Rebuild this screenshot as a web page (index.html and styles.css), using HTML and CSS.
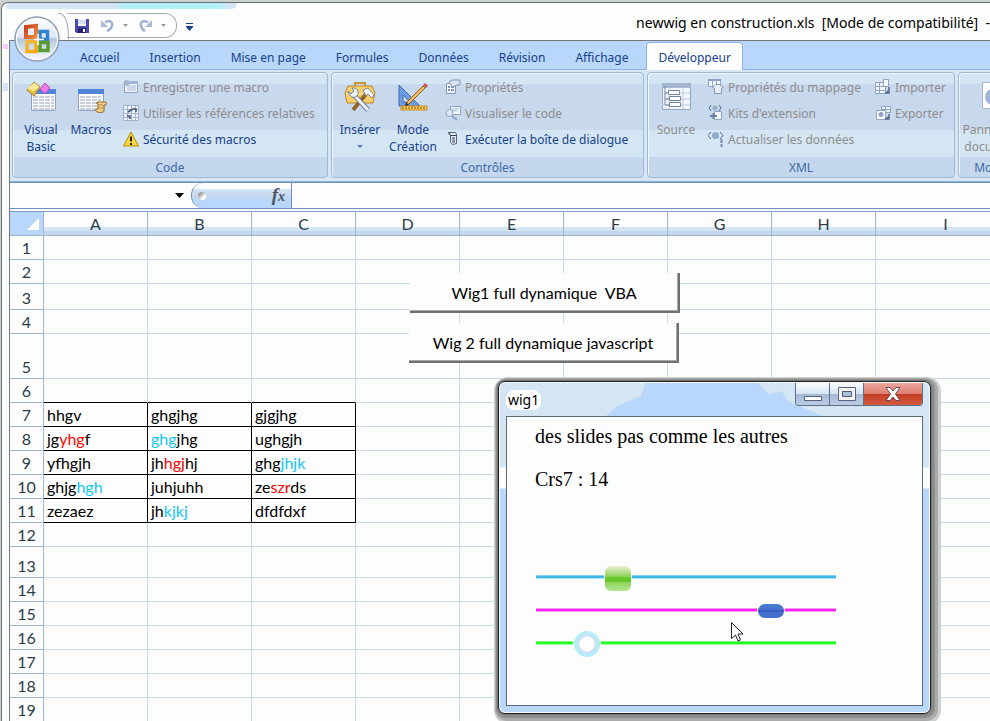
FILE: index.html
```html
<!DOCTYPE html>
<html lang="fr">
<head>
  <meta charset="UTF-8">
  <meta name="viewport" content="width=device-width, initial-scale=1.0">
  <title>newwig en construction.xls</title>
  <link rel="stylesheet" href="styles.css">
</head>
<body>
<div class="window">

  <header class="titlebar">
    <div class="glow"></div>
    <div class="quick">
      <button class="qbtn" aria-label="Enregistrer">
        <svg width="14" height="14" viewBox="0 0 14 14"><path d="M0 0h14v14H1.500L0 12.500z" fill="#4a48b0"/><path d="M3 0h8v7H3z" fill="#f4f6fc"/><path d="M3 2h8M3 4h8" stroke="#b9c4e2"/><path d="M3 9h8v5H3z" fill="#26246e"/><path d="M8 10h2v3H8z" fill="#fff"/></svg>
      </button>
      <button class="qbtn undo" aria-label="Annuler">
        <svg width="13" height="13" viewBox="0 0 13 13"><path d="M4 3.500C8 .500 12 2.500 11 6.500 10.500 9 8.500 11 6 12" fill="none" stroke="#9fb2cf" stroke-width="2.500"/><path d="M0 1v7h7z" fill="#a9bad5"/></svg>
      </button>
      <svg class="arrow" width="5" height="3"><path d="M0 0h5L2.500 3z" fill="#999"/></svg>
      <button class="qbtn redo" aria-label="Rétablir">
        <svg width="13" height="13" viewBox="0 0 13 13"><path d="M9 3.500C5 .500 1 2.500 2 6.500 2.500 9 4 11 6 12" fill="none" stroke="#9fb2cf" stroke-width="2.500"/><path d="M13 1v7H6z" fill="#a9bad5"/></svg>
      </button>
      <svg class="arrow" width="5" height="3"><path d="M0 0h5L2.500 3z" fill="#999"/></svg>
    </div>
    <button class="more" aria-label="Personnaliser">
      <svg width="7" height="8" viewBox="0 0 7 8"><path d="M0 0h7v1H0zM0 3h7v1L3.500 8 0 4z" fill="#15428b"/></svg>
    </button>
    <h1 class="caption">newwig en construction.xls&nbsp; [Mode de compatibilité]&nbsp; -</h1>
  </header>

  <button class="office" aria-label="Bouton Office">
    <svg width="46" height="46" viewBox="0 0 46 46">
      <defs>
        <linearGradient id="orb" x2="0" y2="1"><stop offset="0" stop-color="#fff"/><stop offset=".45" stop-color="#dfe8f3"/><stop offset=".5" stop-color="#b4c8df"/><stop offset="1" stop-color="#fbfdff"/></linearGradient>
        <linearGradient id="red" x2="1" y2="1"><stop stop-color="#c8401c"/><stop offset="1" stop-color="#f08a3c"/></linearGradient>
        <linearGradient id="yel" x2="1" y2="1"><stop stop-color="#f4b63c"/><stop offset="1" stop-color="#f7a400"/></linearGradient>
      </defs>
      <circle cx="23" cy="23" r="22" fill="url(#orb)" stroke="#8f9fb5" stroke-width="1.500"/>
      <circle cx="23" cy="23" r="20.500" fill="none" stroke="#fff" stroke-width="1"/>
      <path d="M26 15.500h7.500v8H26z" fill="none" stroke="#2f83cf" stroke-width="3.500"/>
      <path d="M26 26.500h8v8h-8z" fill="none" stroke="#5a9c32" stroke-width="3.500"/>
      <path d="M13 25.500h9v10h-9z" fill="none" stroke="url(#yel)" stroke-width="3.500"/>
      <path d="M12 11l10-1v11H12z" fill="none" stroke="url(#red)" stroke-width="4"/>
      <path d="M20 23.500h10M24 18v11" stroke="#fff" stroke-width="1.500"/>
    </svg>
  </button>

  <main class="frame">
    <nav class="tabs">
      <button class="tab">Accueil</button>
      <button class="tab">Insertion</button>
      <button class="tab">Mise en page</button>
      <button class="tab">Formules</button>
      <button class="tab">Données</button>
      <button class="tab">Révision</button>
      <button class="tab">Affichage</button>
      <button class="tab active">Développeur</button>
    </nav>

    <div class="ribbon">
      <section class="group code">
        <div class="tools">
          <button class="big">
            <svg width="32" height="32" viewBox="0 0 32 32"><path d="M6.500 8.500h24v21h-24z" fill="#fff" stroke="#8ea2c4"/><path d="M6 8h25v5H6z" fill="#4f86dc"/><path d="M8 16h21M8 19h21M8 22h21M8 25h21M8 28h21" stroke="#8d9dbc" stroke-dasharray="5 1"/><path d="M9 1l6 5-6 9-7-6z" fill="#e9bd3c" stroke="#a87d22"/><path d="M9 1.500l5.500 4.500-6 4.500-6-3z" fill="#fbe99a"/><path d="M20 2l5 5-5 6-5-5z" fill="#ee7ae6" stroke="#b04bb5"/></svg>
            <span>Visual<br>Basic</span>
          </button>
          <button class="big">
            <svg width="32" height="32" viewBox="0 0 32 32"><path d="M3.500 8.500h25v21h-25z" fill="#fff" stroke="#8ea2c4"/><path d="M3 8h26v5H3z" fill="#4f86dc"/><path d="M5 16h21M5 19h21M5 22h21M5 25h21M5 28h18" stroke="#8d9dbc" stroke-dasharray="5 1"/><path d="M22 21h8c2 0 2 3 0 3h-1v6c0 2-7 2-8 0-1-1 0-2 1-2h1v-5h-1z" fill="#f1cf86" stroke="#8e6320"/><path d="M24 24h4M24 27h4" stroke="#b78a3d"/></svg>
            <span>Macros</span>
          </button>
          <div class="stack">
            <button class="small" disabled>
              <svg width="16" height="16" viewBox="0 0 16 16"><path d="M1.500 2.500h13v11h-13z" fill="#eef3fa" stroke="#8fa3c4"/><path d="M6 2h9v3H6z" fill="#9eb5d8"/><path d="M4 7h9M4 9h9M4 11h9" stroke="#b0bfd8"/><circle cx="3.500" cy="4" r="3" fill="#a8b8cf"/></svg>
              Enregistrer une macro
            </button>
            <button class="small" disabled>
              <svg width="16" height="16" viewBox="0 0 16 16"><path d="M.500.500h15v15H.500zM.500 4.500h15M.500 8.500h15M.500 12.500h15M4.500.500v15M8.500.500v15M12.500.500v15" fill="#eef3fa" stroke="#a3b3cd"/><path d="M5 7l5-3M10 4h3v3M4 11h3v3" fill="none" stroke="#41557a" stroke-width="1.500"/></svg>
              Utiliser les références relatives
            </button>
            <button class="small">
              <svg width="16" height="16" viewBox="0 0 16 16"><path d="M8 1l7.500 14H.500z" fill="#ffd93b" stroke="#b98a00"/><path d="M8 5.500v5" stroke="#222" stroke-width="2"/><path d="M7 12h2v2H7z" fill="#222"/></svg>
              Sécurité des macros
            </button>
          </div>
        </div>
        <h2>Code</h2>
      </section>

      <section class="group controls">
        <div class="tools">
          <button class="big">
            <svg width="32" height="32" viewBox="0 0 32 32"><path d="M11 6V2h10v4" fill="none" stroke="#c69535" stroke-width="2"/><path d="M4 5h24l3 7-2 10H3L1 12z" fill="#f7cf6a" stroke="#bd8728"/><path d="M2 13h28" stroke="#fff0bd"/><path d="M22 13L9 29" stroke="#94662a" stroke-width="4"/><path d="M19 9l5-2 6 7-2 3-4-4-2 2z" fill="#f6f8fb" stroke="#7e8a9c"/><path d="M10 14l14 15" stroke="#6e7d94" stroke-width="5"/><path d="M10 14l14 15" stroke="#eef2f8" stroke-width="3"/><path d="M4 10l3 3 3-3-2-3c5-1 8 4 5 8-3 3-8 1-9-5z" fill="#eef2f8" stroke="#6e7d94"/></svg>
            <span>Insérer</span>
            <svg class="drop" width="6" height="3"><path d="M0 0h6L3 3z" fill="#567db0"/></svg>
          </button>
          <button class="big mode">
            <svg width="32" height="32" viewBox="0 0 32 32"><path d="M2 4v21h21z" fill="#6f9be0" stroke="#416bb5"/><path d="M6 14v7h7z" fill="#cad9ef" stroke="#416bb5"/><path d="M4 25h26v4H4z" fill="#f9cc58" stroke="#c48b28"/><path d="M6 26v2M9 26v2M12 26v2M15 26v2M18 26v2M21 26v2M24 26v2M27 26v2" stroke="#7a5516"/><path d="M26 5l2 2-16 16-3 1 1-3z" fill="#f6c35a" stroke="#885b1c"/><path d="M26 4l2-2 3 3-2 2z" fill="#d54b42"/><path d="M8 25l1-4 3 3z" fill="#38342f"/></svg>
            <span>Mode<br>Création</span>
          </button>
          <div class="stack">
            <button class="small" disabled>
              <svg width="16" height="16" viewBox="0 0 16 16"><path d="M1.500 4.500h9v10h-9z" fill="#f5f8fc" stroke="#8396b4"/><path d="M3 8h2M3 11h2M6 8h3M6 11h3" stroke="#8094b8" stroke-width="2"/><path d="M4 3l3-2h8v5h-3l-4 2-3-3z" fill="#dae4f2" stroke="#8396b4"/></svg>
              Propriétés
            </button>
            <button class="small" disabled>
              <svg width="16" height="16" viewBox="0 0 16 16"><path d="M5.500 1.500h10v8h-10z" fill="#f5f8fc" stroke="#8fa3c4"/><path d="M7 4h7M7 6h5" stroke="#a4b5d0"/><circle cx="4.500" cy="8" r="3.500" fill="#dce8f6" stroke="#8fa3c4"/><path d="M7 11l5 4" stroke="#8fa3c4" stroke-width="2"/></svg>
              Visualiser le code
            </button>
            <button class="small">
              <svg width="16" height="16" viewBox="0 0 16 16"><path d="M3.500 1.500h7l1 2v9l-4 1-2-2V4.500z" fill="#e5e9f0" stroke="#55637d"/><path d="M3.500 1.500l2 3h6" fill="none" stroke="#36435a"/><path d="M7 7h3M7 9h3M7 11h3" stroke="#36435a"/></svg>
              Exécuter la boîte de dialogue
            </button>
          </div>
        </div>
        <h2>Contrôles</h2>
      </section>

      <section class="group xml">
        <div class="tools">
          <button class="big" disabled>
            <svg width="32" height="32" viewBox="0 0 32 32"><path d="M2.500 2.500h28v26h-28z" fill="#f3f6fb" stroke="#94a6c4"/><path d="M2 2h29v5H2z" fill="#a4b5cf"/><path d="M2 12h28M2 18h28M2 24h28M9 7v21M23 7v21" stroke="#c0cde0"/><path d="M5 5v19h4M5 12h3M5 18h4" fill="none" stroke="#7486a8"/><path d="M8.500 9.500h11v4h-11zM9.500 15.500h11v4h-11zM9.500 21.500h11v4h-11z" fill="#fff" stroke="#7486a8"/></svg>
            <span>Source</span>
          </button>
          <div class="stack">
            <button class="small" disabled>
              <svg width="16" height="16" viewBox="0 0 16 16"><path d="M.500.500h12v7H.500zM4.500.500v7M8.500.500v7" fill="#f2f6fb" stroke="#8fa3c4"/><path d="M0 0h13v2H0z" fill="#8fa3c4"/><path d="M4.500 8.500l3-3h4l4 3-2 1v5h-7v-5z" fill="#e6edf6" stroke="#8496b2"/></svg>
              Propriétés du mappage
            </button>
            <button class="small" disabled>
              <svg width="16" height="16" viewBox="0 0 16 16"><path d="M3 0L1 3l2 3M11 0l2 3-2 3" fill="none" stroke="#566783"/><circle cx="7" cy="3" r="2.500" fill="#9caec9"/><path d="M6.500 6.500h7v8h-7z" fill="#f2f6fb" stroke="#8fa3c4"/><path d="M2 11h7M5.500 8v6" stroke="#6d80a3" stroke-width="2"/></svg>
              Kits d'extension
            </button>
            <button class="small" disabled>
              <svg width="16" height="16" viewBox="0 0 16 16"><path d="M3 1L0 4.500 3 8M12 1l3 3.500L12 8" fill="none" stroke="#566783"/><circle cx="7.500" cy="4.500" r="3.500" fill="#93a9cb"/><path d="M13.500 8v4M13.500 13v3" stroke="#7689aa" stroke-width="2"/></svg>
              Actualiser les données
            </button>
          </div>
          <div class="stack second">
            <button class="small" disabled>
              <svg width="16" height="16" viewBox="0 0 16 16"><path d="M.500 3.500h10v11H.500zM.500 7.500h10M.500 11.500h10M4.500 3v11" fill="#f2f6fb" stroke="#8fa3c4"/><path d="M8.500.500h5v7h-5z" fill="#fff" stroke="#8fa3c4"/><path d="M14 8v6h-3l2-2" fill="none" stroke="#52668a" stroke-width="1.500"/></svg>
              Importer
            </button>
            <button class="small" disabled>
              <svg width="16" height="16" viewBox="0 0 16 16"><path d="M6.500 1.500h9v6h-9zM6.500 4.500h9M10.500 1v6" fill="#f2f6fb" stroke="#8fa3c4"/><path d="M1.500 5.500h9v9h-9z" fill="#fff" stroke="#8fa3c4"/><circle cx="6" cy="9.500" r="2.500" fill="#8fa3c4"/><path d="M14 9v5h-3l2-2" fill="none" stroke="#52668a" stroke-width="1.500"/></svg>
              Exporter
            </button>
          </div>
        </div>
        <h2>XML</h2>
      </section>

      <section class="group docs">
        <div class="tools">
          <button class="big" disabled>
            <svg width="32" height="32" viewBox="0 0 32 32"><path d="M2.500 1.500h27v26h-27z" fill="#fff" stroke="#a8b7cf"/><circle cx="13" cy="16" r="8" fill="#9fb6d8"/></svg>
            <span>Panneau de<br>documents</span>
          </button>
        </div>
        <h2>Modifier</h2>
      </section>
    </div>

    <div class="formulabar">
      <div class="namebox">
        <input type="text" aria-label="Zone Nom">
        <svg width="9" height="5"><path d="M0 0h9L4.500 5z" fill="#000"/></svg>
      </div>
      <div class="fxbox"><i class="knob"></i><button class="fx" aria-label="Insérer une fonction"><i>f</i><sub>x</sub></button></div>
      <input class="formula" type="text" aria-label="Barre de formule">
    </div>

    <div class="sheet">
      <table class="grid">
        <thead>
          <tr><th class="corner"><svg width="12" height="12"><path d="M12 0v12H0z" fill="#fff"/></svg></th><th>A</th><th>B</th><th>C</th><th>D</th><th>E</th><th>F</th><th>G</th><th>H</th><th class="last">I</th></tr>
        </thead>
        <tbody>
          <tr><th>1</th><td></td><td></td><td></td><td></td><td></td><td></td><td></td><td></td><td></td></tr>
          <tr><th>2</th><td></td><td></td><td></td><td></td><td></td><td></td><td></td><td></td><td></td></tr>
          <tr class="h26"><th>3</th><td></td><td></td><td></td><td></td><td></td><td></td><td></td><td></td><td></td></tr>
          <tr><th>4</th><td></td><td></td><td></td><td></td><td></td><td></td><td></td><td></td><td></td></tr>
          <tr class="h45"><th>5</th><td></td><td></td><td></td><td></td><td></td><td></td><td></td><td></td><td></td></tr>
          <tr class="above"><th>6</th><td></td><td></td><td></td><td></td><td></td><td></td><td></td><td></td><td></td></tr>
          <tr class="data"><th>7</th><td>hhgv</td><td>ghgjhg</td><td>gjgjhg</td><td></td><td></td><td></td><td></td><td></td><td></td></tr>
          <tr class="data"><th>8</th><td>jg<span class="red">yhg</span>f</td><td><span class="cyan">ghg</span>jhg</td><td>ughgjh</td><td></td><td></td><td></td><td></td><td></td><td></td></tr>
          <tr class="data"><th>9</th><td>yfhgjh</td><td>jh<span class="red">hgj</span>hj</td><td>ghg<span class="cyan">jhjk</span></td><td></td><td></td><td></td><td></td><td></td><td></td></tr>
          <tr class="data"><th>10</th><td>ghjg<span class="cyan">hgh</span></td><td>juhjuhh</td><td>ze<span class="red">szr</span>ds</td><td></td><td></td><td></td><td></td><td></td><td></td></tr>
          <tr class="data"><th>11</th><td>zezaez</td><td>jh<span class="cyan">kjkj</span></td><td>dfdfdxf</td><td></td><td></td><td></td><td></td><td></td><td></td></tr>
          <tr><th>12</th><td></td><td></td><td></td><td></td><td></td><td></td><td></td><td></td><td></td></tr>
          <tr class="h31"><th>13</th><td></td><td></td><td></td><td></td><td></td><td></td><td></td><td></td><td></td></tr>
          <tr><th>14</th><td></td><td></td><td></td><td></td><td></td><td></td><td></td><td></td><td></td></tr>
          <tr><th>15</th><td></td><td></td><td></td><td></td><td></td><td></td><td></td><td></td><td></td></tr>
          <tr><th>16</th><td></td><td></td><td></td><td></td><td></td><td></td><td></td><td></td><td></td></tr>
          <tr><th>17</th><td></td><td></td><td></td><td></td><td></td><td></td><td></td><td></td><td></td></tr>
          <tr><th>18</th><td></td><td></td><td></td><td></td><td></td><td></td><td></td><td></td><td></td></tr>
          <tr><th>19</th><td></td><td></td><td></td><td></td><td></td><td></td><td></td><td></td><td></td></tr>
        </tbody>
      </table>
      <button class="sheetbtn wig-vba">Wig1 full dynamique&nbsp; VBA</button>
      <button class="sheetbtn wig-js">Wig 2 full dynamique javascript</button>
    </div>
  </main>
</div>

<div class="dialog" role="dialog" aria-labelledby="wigtitle">
  <div class="dialog-bar">
    <span class="dialog-title" id="wigtitle">wig1</span>
    <div class="winbtns">
      <button class="min" aria-label="Réduire"><svg width="18" height="6"><path d="M.500.500h17v4H.500z" fill="#fff" stroke="#5a6478"/></svg></button>
      <button class="max" aria-label="Agrandir"><svg width="18" height="14"><path d="M.500.500h17v13H.500z" fill="#f2f2f2" stroke="#5a6478"/><path d="M4.500 4.500h9v5h-9z" fill="#a9bfdc" stroke="#4f5b72"/></svg></button>
      <button class="close" aria-label="Fermer"><svg width="16" height="14" viewBox="0 0 16 14"><path d="M1 .500h4l3 3.500 3-3.500h4L10.500 7l4.500 6.500h-4L8 10l-3 3.500H1L5.500 7z" fill="#fff" stroke="#6a4a55"/></svg></button>
    </div>
  </div>
  <div class="dialog-body">
    <p>des slides pas comme les autres</p>
    <p>Crs7 : 14</p>
    <div class="sliders">
      <input class="slide green" type="range" min="0" max="100" value="25" aria-label="Crs1">
      <input class="slide blue" type="range" min="0" max="100" value="81" aria-label="Crs4">
      <input class="slide ring" type="range" min="0" max="100" value="14" aria-label="Crs7">
    </div>
  </div>
  <svg class="pointer" width="13" height="20" viewBox="0 0 13 20"><path d="M.500.500v16l4-3.500 2.500 6 2.500-1-2.500-6h5z" fill="#fff" stroke="#223"/></svg>
</div>
</body>
</html>
```
FILE: styles.css
```css
* {
  box-sizing: border-box;
}
body {
  margin: 0;
  height: 100vh;
  overflow: hidden;
  padding: 2px 0 0 1px;
  background: #c9d1cf;
  font-family: "Noto Sans", "Open Sans", sans-serif;
  font-size: 12px;
  color: #15428b;
}
button, input {
  font: inherit;
  color: inherit;
  background: none;
  border: none;
  padding: 0;
  margin: 0;
}
svg {
  display: block;
  flex: none;
}
.window {
  position: relative;
  height: 100%;
  background:
    linear-gradient(#f3cdf8, #f3cdf8) 1px 41px / 5px 5px no-repeat,
    linear-gradient(#d3e5f4, #d3e5f4) 1px 80px / 5px 8px no-repeat,
    #fdfdfd;
  border: solid #6b6f70;
  border-width: 1px 0 0 1px;
  border-top-left-radius: 7px;
  overflow: hidden;
}

/* title bar */
.titlebar {
  position: relative;
  display: flex;
  align-items: flex-start;
  height: 37px;
  padding: 10px 0 0 65px;
}
.glow {
  position: absolute;
  left: 4px;
  top: 0;
  width: 231px;
  height: 6px;
  border-radius: 0 0 6px 0;
  background: linear-gradient(to right, #d3e5f4 48%, #b4f0f8 50%, #b4f0f8 92%, #d3e5f4 96%);
}
.quick {
  position: relative;
  display: flex;
  align-items: center;
  height: 25px;
  width: 110px;
  padding-left: 8px;
  border: 1px solid #a5a8ac;
  border-left: none;
  border-radius: 0 12px 12px 0;
}
/* curved edge that follows the round Office button */
.quick::before {
  content: "";
  position: absolute;
  left: -9px;
  top: -1px;
  width: 10px;
  height: 25px;
  border: solid #a5a8ac;
  border-width: 1px 1px 0 0;
  border-radius: 0 9px 0 0 / 0 24px 0 0;
}
.quick .undo {
  margin-left: 12px;
}
.quick .redo {
  margin-left: 11px;
}
.arrow {
  margin-left: 9px;
}
.more {
  margin: 10px 0 0 9px;
}
.caption {
  margin: 0 0 0 auto;
  white-space: nowrap;
  font-size: 14px;
  line-height: 20px;
  font-weight: normal;
  color: #000;
}
.office {
  position: absolute;
  left: 12px;
  top: 13px;
  z-index: 2;
}

/* tabs */
.frame {
  margin-left: 7px;
  border: solid #777;
  border-width: 1px 0 0 1px;
}
.tabs {
  display: flex;
  gap: 6px;
  height: 29px;
  padding: 1px 0 0 58px;
  background: #b9d7fa;
  border-bottom: 1px solid #8db2e3;
}
.tab {
  height: 28px;
  padding: 2px 11px 0;
  border: 1px solid transparent;
  border-bottom: none;
  white-space: nowrap;
}
.tab.active {
  border-color: #8db2e3;
  border-radius: 4px 4px 0 0;
  background: #fdfdfd;
}

/* ribbon */
.ribbon {
  display: flex;
  gap: 3px;
  padding: 2px 0 3px 2px;
  background: #d7e6f5;
  border-bottom: 1px solid #8fb0d5;
}
.group {
  flex: none;
  height: 106px;
  border: 1px solid #9db9d4;
  border-radius: 4px;
  box-shadow: inset 1px 1px 0 #f0f6fc;
  background: linear-gradient(#d4e6f4 11px, #c8d8ed 11px, #c8d8ed 57px, #d4e6f4 57px, #d4e6f4 84px, #c5d7ec 84px);
}
.code {
  width: 316px;
}
.controls {
  width: 313px;
}
.xml {
  width: 308px;
}
.docs {
  width: 80px;
}
.group h2 {
  margin: 0;
  text-align: center;
  font-size: 12px;
  line-height: 20px;
  font-weight: normal;
  color: #3e6aaa;
}
.tools {
  display: flex;
  height: 85px;
  padding-left: 3px;
}
.big {
  display: flex;
  flex-direction: column;
  align-items: center;
  width: 50px;
  padding-top: 8px;
  line-height: 17px;
}
.big.mode {
  width: 56px;
}
.docs .big {
  width: 68px;
}
.big span {
  margin-top: 8px;
  white-space: nowrap;
}
.drop {
  margin-top: 7px;
}
.stack {
  display: flex;
  flex-direction: column;
  margin-top: 1px;
  padding-left: 7px;
}
.controls .stack {
  padding-left: 4px;
}
.stack.second {
  padding-left: 14px;
}
.small {
  display: flex;
  align-items: center;
  gap: 4px;
  height: 26px;
  white-space: nowrap;
}
button:disabled {
  color: #8d8d8d;
}

/* formula bar */
.formulabar {
  display: flex;
  height: 27px;
  border: solid #6d93bb;
  border-width: 1px 0;
  background: #fdfdfd;
}
.namebox {
  display: flex;
  align-items: center;
  width: 181px;
}
.namebox input {
  width: 165px;
}
.fxbox {
  display: flex;
  align-items: center;
  justify-content: space-between;
  width: 101px;
  padding: 0 6px;
  border: solid #6d93bb;
  border-width: 0 1px;
  border-radius: 12px 0 0 12px;
  background: linear-gradient(#fdfdfd 6px, #d4e6f4 6px, #c8d8ed 12px, #b9d7fa 18px);
}
.knob {
  width: 8px;
  height: 8px;
  border-radius: 50%;
  background: linear-gradient(135deg, #999 20%, #fff 70%);
}
.fx {
  font-family: "Liberation Serif", serif;
  font-size: 19px;
  line-height: 22px;
  font-weight: bold;
  color: #4a5468;
}
.fx sub {
  font-size: 14px;
  font-style: italic;
  vertical-align: baseline;
}
.formula {
  flex: 1;
}

/* sheet */
.sheet {
  position: relative;
  margin-top: 2px;
  border-top: 1px solid #7a9ec4;
  font-family: Lato, sans-serif;
  font-size: 16px;
  color: #000;
}
.grid {
  table-layout: fixed;
  width: 100%;
  min-width: 1006px;
  border-spacing: 0;
}
.grid th, .grid td {
  height: 24px;
  padding: 0;
  line-height: 20px;
}
.grid th {
  font-weight: normal;
  color: #2b3c48;
  border: solid #9eb6ce;
  border-width: 0 1px 1px 0;
}
.grid thead th {
  width: 104px;
  background: linear-gradient(#fdfdfd 15px, #d4e6f4 15px, #d4e6f4 19px, #c5d7ec 19px);
}
.grid thead .corner {
  width: 34px;
  background: #b9d7fa;
}
.corner svg {
  margin: 0 4px 0 auto;
}
.grid thead .last {
  width: auto;
}
.grid tbody th {
  padding-bottom: 1px;
  vertical-align: bottom;
}
.grid td {
  padding-left: 3px;
  border: solid #c9d8ea;
  border-width: 0 1px 1px 0;
  white-space: nowrap;
}
.grid .h26 th {
  height: 26px;
}
.grid .h45 th {
  height: 45px;
}
.grid .h31 th {
  height: 31px;
}
.above td:nth-child(-n+4) {
  border-bottom-color: #000;
}
.data td:nth-child(-n+4) {
  border-color: #000;
}
.red {
  color: #f00;
}
.cyan {
  color: #12c6f8;
}
.sheetbtn {
  position: absolute;
  height: 40px;
  width: 270px;
  background: #fdfdfd;
  border: solid #707070;
  border-width: 0 2px 2px 0;
  box-shadow: inset -1px -1px 0 #a8a8a8;
}
.wig-vba {
  left: 400px;
  top: 61px;
}
.wig-js {
  left: 399px;
  top: 111px;
}

/* userform */
.dialog {
  position: absolute;
  left: 498px;
  top: 381px;
  width: 433px;
  padding: 1px 7px 7px;
  border: 1px solid #222;
  border-radius: 7px;
  background: linear-gradient(#d4e6f4 85px, #fdfdfd 86px, #fdfdfd 106px, #b9d7fa 107px);
  box-shadow: inset 0 0 0 1px #f4f9fd, 0 0 0 1px #777, 1px 1px 0 3px #8c8e8e, 2px 2px 0 5px #a9acab, 3px 3px 0 7px #cdd0cf;
  color: #000;
}
.dialog-bar {
  position: relative;
  display: flex;
  justify-content: space-between;
  height: 33px;
}
.dialog-bar::before {
  content: "";
  position: absolute;
  inset: 0 24% 0 24%;
  background: #b9d7fa;
  clip-path: polygon(18% 0, 70% 0, 75% 35%, 81% 25%, 84% 55%, 100% 100%, 0 100%, 5% 70%, 16% 40%);
}
.dialog-title {
  align-self: center;
  padding: 0 2px;
  border-radius: 8px;
  background: #fdfdfd;
  font-size: 14px;
  line-height: 20px;
}
.winbtns {
  position: relative;
  display: flex;
  height: 23px;
  border: 1px solid #5e6e86;
  border-top: none;
  border-radius: 0 0 4px 4px;
  overflow: hidden;
}
.winbtns button {
  display: flex;
  align-items: center;
  justify-content: center;
  width: 34px;
  border-right: 1px solid #5e6e86;
  background: linear-gradient(#f4f8fc 2px, #d4e2f1 11px, #a5b9d5 11px, #b9cce4);
}
.winbtns .min {
  padding-top: 10px;
}
.winbtns .close {
  width: 58px;
  border: none;
  background: linear-gradient(#eda79b, #dd7f70 11px, #c23a22 11px, #d35c40);
}
.dialog-body {
  height: 290px;
  padding: 8px 28px;
  border: 1px solid #5b6b78;
  background: #fdfdfd;
  font-family: "Liberation Serif", serif;
  font-size: 20px;
  line-height: 23px;
}
.dialog-body p {
  margin: 0 0 20px;
}
.sliders {
  display: flex;
  flex-direction: column;
  padding: 49px 0 0 1px;
}
.slide {
  -webkit-appearance: none;
  appearance: none;
  width: 300px;
  height: 33px;
}
.slide::-webkit-slider-runnable-track {
  height: 4px;
}
.slide::-webkit-slider-thumb {
  -webkit-appearance: none;
  width: 26px;
  box-shadow: 0 0 0 1px #fdfdfd;
}
.green::-webkit-slider-runnable-track {
  background: linear-gradient(#85d2f2 1px, #3fb6e8 1px, #3fb6e8 3px, #a9ecf8 3px);
}
.green::-webkit-slider-thumb {
  height: 25px;
  margin-top: -9px;
  border-radius: 6px;
  background: linear-gradient(#efefd8, #8fd65c 40%, #66c828 48%, #66c828 62%, #8fd65c 66%, #b4e492);
}
.blue::-webkit-slider-runnable-track {
  background: linear-gradient(#f79af5 1px, #f822f4 1px, #f822f4 3px, #f79af5 3px);
}
.blue::-webkit-slider-thumb {
  height: 14px;
  margin-top: -4px;
  border-radius: 7px;
  background: linear-gradient(#4a7fd0, #4470cc 6px, #3a5cc4 6px, #3a5cc4 8px, #4470cc 8px);
}
.ring::-webkit-slider-runnable-track {
  background: linear-gradient(#7cf97c 1px, #22ff22 1px, #22ff22 3px, #a6f9a6 3px);
}
.ring::-webkit-slider-thumb {
  height: 26px;
  margin-top: -10px;
  border: 3px solid #b3eef8;
  border-radius: 50%;
  background: radial-gradient(#fdfdfd 7px, #cfe0f2 8px);
}
.pointer {
  position: absolute;
  left: 232px;
  top: 240px;
}
```
